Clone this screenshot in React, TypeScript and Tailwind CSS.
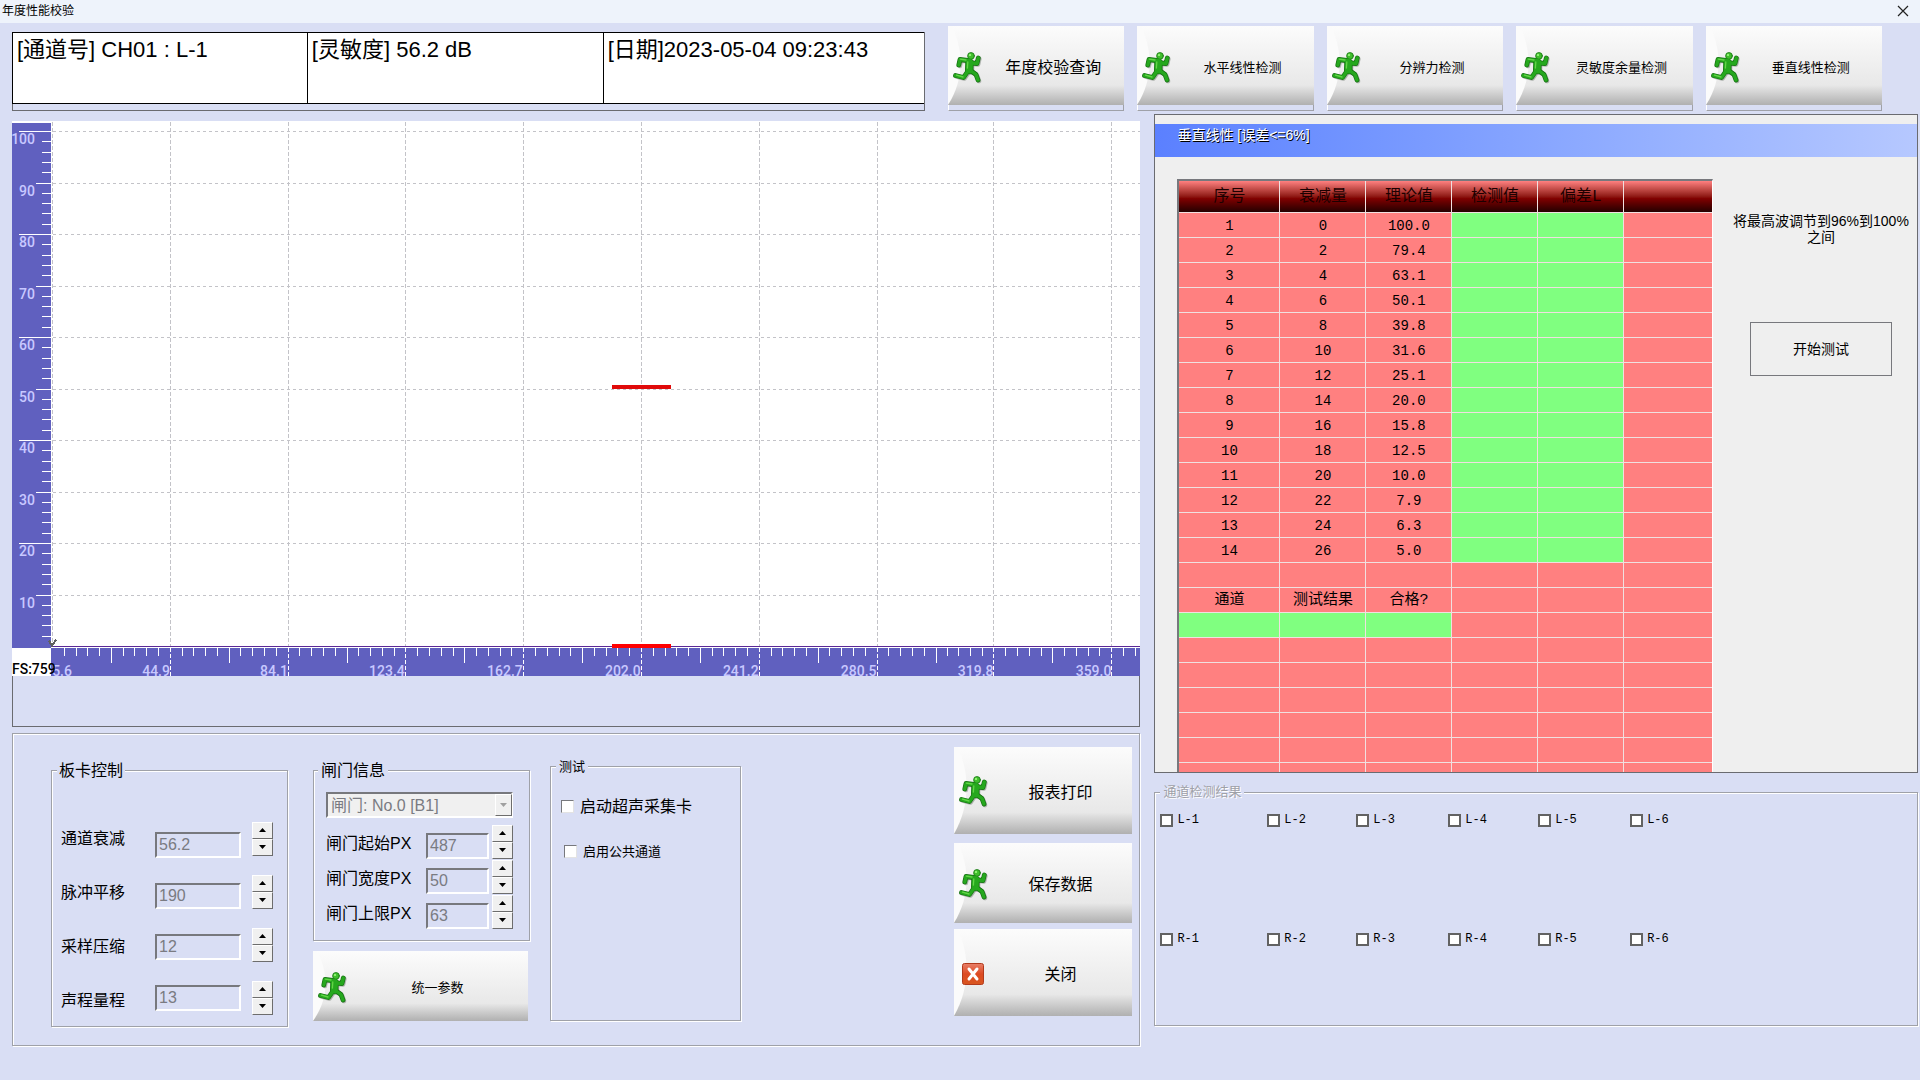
import type { ReactNode } from 'react';
import clsx from 'clsx';

const headers = ['序号', '衰减量', '理论值', '检测值', '偏差L', ''];

const theory = ['100.0', '79.4', '63.1', '50.1', '39.8', '31.6', '25.1', '20.0', '15.8', '12.5', '10.0', '7.9', '6.3', '5.0'];

const tableRows: { cells: string[]; green: number[] }[] = [
  ...theory.map((value, i) => ({ cells: [String(i + 1), String(i * 2), value, '', '', ''], green: [3, 4] })),
  { cells: ['', '', '', '', '', ''], green: [] },
  { cells: ['通道', '测试结果', '合格?', '', '', ''], green: [] },
  { cells: ['', '', '', '', '', ''], green: [0, 1, 2] },
  ...Array.from({ length: 6 }, () => ({ cells: ['', '', '', '', '', ''], green: [] as number[] })),
];

const boardFields = [
  { id: 'attenuation', label: '通道衰减', value: '56.2' },
  { id: 'pulse', label: '脉冲平移', value: '190' },
  { id: 'sampling', label: '采样压缩', value: '12' },
  { id: 'range', label: '声程量程', value: '13' },
];

const gateFields = [
  { id: 'gate-start', label: '闸门起始PX', value: '487' },
  { id: 'gate-width', label: '闸门宽度PX', value: '50' },
  { id: 'gate-limit', label: '闸门上限PX', value: '63' },
];

const xLabels = ['5.6', '44.9', '84.1', '123.4', '162.7', '202.0', '241.2', '280.5', '319.8', '359.0'];

const channels = ['L-1', 'L-2', 'L-3', 'L-4', 'L-5', 'L-6', 'R-1', 'R-2', 'R-3', 'R-4', 'R-5', 'R-6'];

const fieldsetStyle = 'border border-[#9fa1a8] shadow-[1px_1px_0_#fff,inset_1px_1px_0_#fff]';
const sunken = 'border-t-2 border-l-2 border-b-2 border-r-2 border-t-[#77787d] border-l-[#77787d] border-b-white border-r-white';

function RunnerBody({ torso }: { torso: number }) {
  return (
    <>
      <path d="M15.5 8.5 L8 7.5 L6.8 13" />
      <path d="M20 11 L25 11.5 L26.3 6" />
      <path d="M17.5 10.5 L17.2 18" strokeWidth={torso} />
      <path d="M16 19 L11.5 25.5 L3.5 23.5" />
      <path d="M18.5 18.5 L24 22.5 L26 28" />
    </>
  );
}

function RunnerIcon() {
  return (
    <svg viewBox="0 0 30 33" className="h-[33px] w-[30px] shrink-0" fill="none" strokeLinecap="round" strokeLinejoin="round">
      <g stroke="#6f7a6f" strokeWidth="4.6" transform="translate(1 1)" opacity="0.5">
        <RunnerBody torso={8} />
      </g>
      <g stroke="#167012" strokeWidth="4.8">
        <RunnerBody torso={8.4} />
      </g>
      <circle cx="19" cy="3.9" r="3.4" fill="#3fbf2c" stroke="#187514" strokeWidth="0.8" />
      <g stroke="#26a81e" strokeWidth="3.4">
        <RunnerBody torso={7} />
      </g>
      <path d="M14 8 L8.3 7.2 M15.8 10 L15.4 16 M11 25 L4.5 23.2" stroke="#63d548" strokeWidth="1.3" />
      <circle cx="18" cy="2.9" r="1.2" fill="#8ff070" />
    </svg>
  );
}

function CloseIcon() {
  return (
    <svg viewBox="0 0 30 33" className="h-[33px] w-[30px] shrink-0">
      <defs>
        <linearGradient id="close-red" x1="0" y1="0" x2="0" y2="1">
          <stop offset="0" stopColor="#e8806a" />
          <stop offset="0.5" stopColor="#dd4a22" />
          <stop offset="1" stopColor="#d8561f" />
        </linearGradient>
      </defs>
      <rect x="4.5" y="5.5" width="21" height="21" rx="2" fill="url(#close-red)" stroke="#b23a1c" />
      <path d="M11 11 L19 21 M19 11 L11 21" stroke="#fff" strokeWidth="3" strokeLinecap="round" />
    </svg>
  );
}

function ImageButton({ children, className, icon = <RunnerIcon /> }: { children: ReactNode; className?: string; icon?: ReactNode }) {
  return (
    <button
      type="button"
      className={clsx('relative flex items-center bg-linear-to-b from-[#fcfcfc] from-0% via-[#e8e8e8] via-75% to-[#b0b0b0] pt-[5px] pl-1', className)}
    >
      <svg viewBox="0 0 14 80" preserveAspectRatio="none" className="absolute inset-y-0 left-0 h-full w-[14px]">
        <path d="M0 0 H4 C16 26 16 54 0 80 Z" fill="#fbfbfb" />
      </svg>
      <span className="relative">{icon}</span>
      <span className="relative flex-1 text-center">{children}</span>
    </button>
  );
}

function Spinner({ label }: { label: string }) {
  const button = 'flex h-[17px] w-[21px] items-center justify-center border border-t-white border-l-white border-r-[#6d6d6d] border-b-[#6d6d6d] bg-[#f0f0f0]';
  return (
    <div className="flex shrink-0 flex-col">
      <button type="button" aria-label={`${label} +`} className={button}>
        <svg viewBox="0 0 7 4" className="h-1 w-[7px]"><path d="M0 4 L3.5 0 L7 4 Z" /></svg>
      </button>
      <button type="button" aria-label={`${label} -`} className={button}>
        <svg viewBox="0 0 7 4" className="h-1 w-[7px]"><path d="M0 0 L3.5 4 L7 0 Z" /></svg>
      </button>
    </div>
  );
}

function Chart() {
  const yTicks = Array.from({ length: 50 }, (_, i) => i);
  const xTicks = Array.from({ length: 92 }, (_, i) => i + 1);
  return (
    <svg viewBox="0 0 1129 555" className="block h-auto w-full" shapeRendering="crispEdges">
      <rect width="1129" height="555" fill="#fff" />
      <rect y="2" width="39" height="525" fill="#6060bf" />
      <rect x="39" y="527" width="1090" height="28" fill="#6060bf" />
      <g stroke="#c3c3c8" strokeWidth="1">
        {Array.from({ length: 10 }, (_, i) => {
          const y = Math.round(10 + i * 51.5) + 0.5;
          return <line key={i} x1="41" x2="1129" y1={y} y2={y} strokeDasharray="3 3" />;
        })}
        {xLabels.map((label, i) => {
          const x = Math.round(40 + i * 117.8) + 0.5;
          return <line key={label} x1={x} x2={x} y1="1" y2="525" strokeDasharray="4 2" />;
        })}
      </g>
      <g stroke="#fff" strokeWidth="1">
        {yTicks.map((i) => {
          const y = Math.round(10 + i * 10.3) + 0.5;
          const start = i % 10 === 0 ? 7 : i % 5 === 0 ? 24 : 30;
          return <line key={i} x1={start} x2="39" y1={y} y2={y} />;
        })}
        {xTicks.map((i) => {
          const x = Math.round(40 + i * 11.78) + 0.5;
          const end = i % 10 === 0 ? 555 : i % 5 === 0 ? 542 : 535;
          return <line key={i} x1={x} x2={x} y1="527" y2={end} strokeDasharray={i % 10 === 0 ? '4 2' : undefined} />;
        })}
      </g>
      <g fill="#c8c8ff" className="font-['Roboto',sans-serif] text-[14px] font-medium">
        {Array.from({ length: 10 }, (_, i) => (
          <text key={i} x="23" y={Math.round(10 + i * 51.5) + 13} textAnchor="end">{100 - i * 10}</text>
        ))}
        {xLabels.map((label, i) => (
          <text key={label} x={i === 0 ? 60 : Math.round(40 + i * 117.8)} y="555" textAnchor="end">{label}</text>
        ))}
      </g>
      <text x="0" y="553" className="font-['Roboto',sans-serif] text-[14px] font-medium">FS:759</text>
      <line x1="40" x2="1129" y1="525.5" y2="525.5" stroke="#5a2896" />
      <path d="M37 520 L40 525 L44 519" fill="none" stroke="#606060" strokeWidth="2" />
      <rect x="600" y="264" width="59" height="4" fill="#e00a0a" />
      <rect x="600" y="523" width="59" height="4" fill="#ff0000" />
    </svg>
  );
}

function BoardControl() {
  return (
    <fieldset className={clsx(fieldsetStyle, 'mt-[27px] flex w-[237px] px-[9px] pb-[11px]')}>
      <legend className="-ml-1 bg-[#d9def4] px-[2px] leading-5">板卡控制</legend>
      <div className="flex">
        <div className="flex w-[94px] flex-col gap-[30px] pt-[46px]">
          {boardFields.map((field) => (
            <label key={field.id} htmlFor={field.id} className="leading-6">{field.label}</label>
          ))}
        </div>
        <div className="flex w-[97px] flex-col gap-[25px] pt-[51px]">
          {boardFields.map((field) => (
            <input key={field.id} id={field.id} disabled defaultValue={field.value} className={clsx(sunken, 'h-[26px] w-[86px] px-[2px] text-[#7a7b82]')} />
          ))}
        </div>
        <div className="flex flex-col gap-[19px] pt-[41px]">
          {boardFields.map((field) => (
            <Spinner key={field.id} label={field.label} />
          ))}
        </div>
      </div>
    </fieldset>
  );
}

function GateInfo() {
  return (
    <div className="mt-[27px] w-[217px]">
      <fieldset className={clsx(fieldsetStyle, 'px-3 pb-[10px]')}>
        <legend className="-ml-2 bg-[#d9def4] px-[3px] leading-5">闸门信息</legend>
        <div className="relative mt-[11px] mr-1">
          <select disabled aria-label="闸门" className={clsx(sunken, 'block h-[26px] w-full appearance-none bg-[#f0f0f0] px-[3px] text-[#7a7b82] opacity-100')}>
            <option>闸门: No.0 [B1]</option>
          </select>
          <span className="pointer-events-none absolute top-[2px] right-[1px] flex h-[22px] w-[17px] items-center justify-center border border-t-white border-l-white border-r-[#6d6d6d] border-b-[#6d6d6d] bg-[#f0f0f0]">
            <svg viewBox="0 0 7 4" className="h-1 w-[7px]"><path d="M0 0 L3.5 4 L7 0 Z" fill="#a0a0a0" /></svg>
          </span>
        </div>
        <div className="mt-[7px] mr-1 mb-px flex flex-col gap-px">
          {gateFields.map((field) => (
            <div key={field.id} className="flex items-end justify-between">
              <label htmlFor={field.id} className="self-center pt-1">{field.label}</label>
              <div className="flex items-end gap-[3px]">
                <input id={field.id} disabled defaultValue={field.value} className={clsx(sunken, 'h-[26px] w-[63px] px-[2px] text-[#7a7b82]')} />
                <Spinner label={field.label} />
              </div>
            </div>
          ))}
        </div>
      </fieldset>
      <ImageButton className="mt-[10px] h-[70px] w-[215px] text-[13px]">统一参数</ImageButton>
    </div>
  );
}

function TestOptions() {
  const box = 'h-[13px] w-[13px] appearance-none border border-t-[#77787d] border-l-[#77787d] border-b-[#e3e3e3] border-r-[#e3e3e3] bg-white';
  return (
    <fieldset className={clsx(fieldsetStyle, 'mt-[23px] mb-[6px] w-[191px] px-[10px]')}>
      <legend className="-ml-[5px] bg-[#d9def4] px-[3px] text-[13px] leading-5">测试</legend>
      <label className="mt-[18px] flex h-6 items-center gap-[6px]">
        <input type="checkbox" className={box} />
        启动超声采集卡
      </label>
      <label className="mt-[21px] ml-[3px] flex h-6 items-center gap-[6px] text-[13px]">
        <input type="checkbox" className={box} />
        启用公共通道
      </label>
    </fieldset>
  );
}

function ResultPanel() {
  return (
    <section className="overflow-hidden border border-[#6a6b70] bg-[#efefef] pt-[9px]">
      <h2 className="h-[33px] bg-linear-to-r from-[#5b80ff] to-[#b6c8ff] pl-[22px] text-[14px] leading-[22px] text-white [text-shadow:1px_1px_0_#000]">
        垂直线性 [误差&lt;=6%]
      </h2>
      <div className="mt-[22px] flex">
        <div className="ml-[22px] h-[593px] min-w-0 flex-[532] overflow-hidden border-t-2 border-r border-l-2 border-t-[#77787d] border-l-[#77787d] border-r-white">
          <table className="w-full table-fixed border-separate border-spacing-0 bg-[#ff8080] text-center font-['Liberation_Mono','Noto_Sans_CJK_SC',monospace]">
            <thead>
              <tr className="h-[32px] bg-linear-to-b from-[#ff8080] via-[#800000] via-55% to-[#200000]">
                {headers.map((header, i) => (
                  <th
                    key={i}
                    className={clsx(
                      'border-b border-[#f0e0e0] p-0 text-[16px] leading-6 font-normal text-[#1c0000]',
                      i === 0 ? 'w-[101px]' : i < 5 && 'w-[86px]',
                      i < 5 && 'border-r'
                    )}
                  >
                    {header}
                  </th>
                ))}
              </tr>
            </thead>
            <tbody>
              {tableRows.map((row, r) => (
                <tr key={r} className="h-[25px]">
                  {row.cells.map((cell, i) => (
                    <td
                      key={i}
                      className={clsx(
                        'border-b border-[#f0e0e0] px-0 pt-[2px] pb-0 leading-[22px]',
                        r < theory.length ? 'text-[14px]' : 'text-[15px]',
                        i < 5 && 'border-r',
                        row.green.includes(i) && 'bg-[#80ff80]'
                      )}
                    >
                      {cell}
                    </td>
                  ))}
                </tr>
              ))}
            </tbody>
          </table>
        </div>
        <div className="flex flex-[192] flex-col items-center pt-[34px] pl-3">
          <p className="text-center text-[14px] leading-4">
            将最高波调节到96%到100%
            <br />
            之间
          </p>
          <button type="button" className="mt-[77px] h-[54px] w-[142px] border border-[#77787d] text-[14px]">开始测试</button>
        </div>
      </div>
    </section>
  );
}

function ChannelResults() {
  return (
    <fieldset className={clsx(fieldsetStyle, 'mt-[9px] pb-[76px] pl-[5px]')}>
      <legend className="bg-[#d9def4] px-[3px] text-[13px] leading-5 text-[#9fa1a8] [text-shadow:1px_1px_0_#fff]">通道检测结果</legend>
      <div className="grid grid-cols-[107fr_89fr_92fr_90fr_92fr_287fr] gap-y-[99px] pt-2">
        {channels.map((channel) => (
          <label key={channel} className="flex h-5 items-center gap-1 font-['Liberation_Mono',monospace] text-[12px]">
            <input type="checkbox" className="h-[13px] w-[13px] appearance-none border-2 border-[#626262] bg-white" />
            {channel}
          </label>
        ))}
      </div>
    </fieldset>
  );
}

export default function App() {
  return (
    <main className="min-h-screen bg-[#d9def4] font-['Liberation_Sans','Noto_Sans_CJK_SC',sans-serif] text-[16px] leading-6 text-black">
      <header className="flex h-[23px] items-center justify-between bg-[#eef3fb] pr-[11px] pb-[2px] pl-[2px]">
        <h1 className="text-[12px] leading-4">年度性能校验</h1>
        <button type="button" aria-label="关闭窗口">
          <svg viewBox="0 0 12 12" className="h-3 w-3" stroke="#222" strokeWidth="1.2"><path d="M1 1 L11 11 M11 1 L1 11" /></svg>
        </button>
      </header>

      <div className="flex pt-[3px] pr-[38px] pl-3">
        <div className="mt-[6px] flex h-[79px] flex-[911] flex-col border-r border-b border-l border-[#6a6b70]">
          <div className="-ml-px flex h-[72px] border-y border-l border-black bg-white text-[22px] leading-[34px]">
            <div className="flex-[295] border-r border-black pl-1">[通道号] CH01 : L-1</div>
            <div className="flex-[296] border-r border-black pl-1">[灵敏度] 56.2 dB</div>
            <div className="flex-[322] pl-1">[日期]2023-05-04 09:23:43</div>
          </div>
        </div>
        <div className="ml-[23px] flex flex-[934] gap-[13px] text-[13px]">
          {['年度校验查询', '水平线性检测', '分辨力检测', '灵敏度余量检测', '垂直线性检测'].map((name, i) => (
            <div key={name} className="flex-1 border-r border-b border-l border-b-[#9fa1a8] border-r-[#9fa1a8] border-l-white pb-[5px]">
              <ImageButton className={clsx('-mx-px h-[79px] w-[calc(100%+2px)]', i === 0 && 'text-[16px]')}>{name}</ImageButton>
            </div>
          ))}
        </div>
      </div>

      <div className="flex gap-[14px] pt-[3px] pr-[2px] pl-3">
        <div className="min-w-0 flex-[1129] pt-[7px]">
          <Chart />
          <div className="h-[51px] border-r border-b border-l border-[#6a6b70]" />
          <section className={clsx(fieldsetStyle, 'mt-[6px] flex pb-[18px] pl-[38px]')}>
            <BoardControl />
            <div className="ml-[25px]">
              <GateInfo />
            </div>
            <div className="ml-5 flex">
              <TestOptions />
            </div>
            <div className="mt-[13px] mr-[7px] ml-auto flex w-[178px] flex-col">
              <ImageButton className="h-[87px]">报表打印</ImageButton>
              <ImageButton className="mt-[9px] h-[80px]">保存数据</ImageButton>
              <ImageButton className="mt-[6px] h-[87px]" icon={<CloseIcon />}>关闭</ImageButton>
            </div>
          </section>
        </div>
        <div className="min-w-0 flex-[764]">
          <ResultPanel />
          <ChannelResults />
        </div>
      </div>
    </main>
  );
}
